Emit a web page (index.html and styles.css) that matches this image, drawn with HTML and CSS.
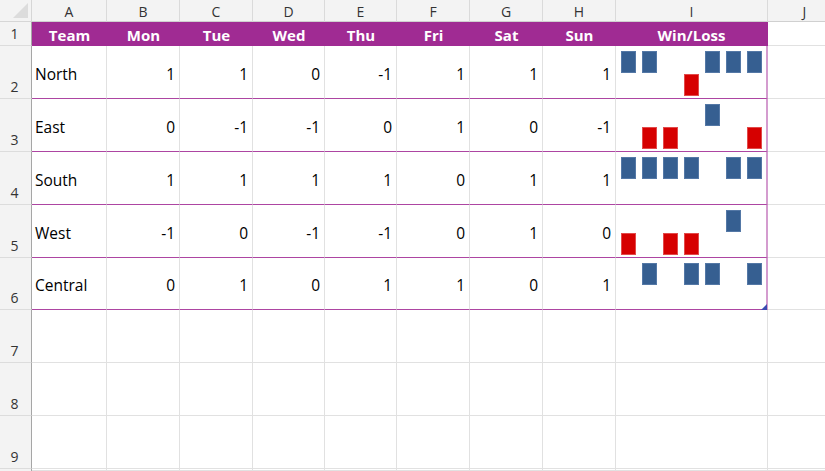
FILE: index.html
```html
<!DOCTYPE html>
<html>
<head>
<meta charset="utf-8">
<link rel="stylesheet" href="styles.css">
</head>
<body>
<div class="sheet">
  <!-- column headers -->
  <div class="corner"><div class="tri"></div></div>
  <div class="ch">A</div><div class="ch">B</div><div class="ch">C</div><div class="ch">D</div><div class="ch">E</div><div class="ch">F</div><div class="ch">G</div><div class="ch">H</div><div class="ch">I</div><div class="ch">J</div>

  <!-- row 1 -->
  <div class="rh rh1">1</div>
  <div class="th">Team</div><div class="th">Mon</div><div class="th">Tue</div><div class="th">Wed</div><div class="th">Thu</div><div class="th">Fri</div><div class="th">Sat</div><div class="th">Sun</div><div class="th th-last">Win/Loss</div>
  <div class="c"></div>

  <!-- row 2 -->
  <div class="rh">2</div>
  <div class="td txt">North</div><div class="td num">1</div><div class="td num">1</div><div class="td num">0</div><div class="td num">-1</div><div class="td num">1</div><div class="td num">1</div><div class="td num">1</div>
  <div class="td spark"><div class="slot p"><i></i></div><div class="slot p"><i></i></div><div class="slot z"><i></i></div><div class="slot n"><i></i></div><div class="slot p"><i></i></div><div class="slot p"><i></i></div><div class="slot p"><i></i></div></div>
  <div class="c"></div>

  <!-- row 3 -->
  <div class="rh">3</div>
  <div class="td txt">East</div><div class="td num">0</div><div class="td num">-1</div><div class="td num">-1</div><div class="td num">0</div><div class="td num">1</div><div class="td num">0</div><div class="td num">-1</div>
  <div class="td spark"><div class="slot z"><i></i></div><div class="slot n"><i></i></div><div class="slot n"><i></i></div><div class="slot z"><i></i></div><div class="slot p"><i></i></div><div class="slot z"><i></i></div><div class="slot n"><i></i></div></div>
  <div class="c"></div>

  <!-- row 4 -->
  <div class="rh">4</div>
  <div class="td txt">South</div><div class="td num">1</div><div class="td num">1</div><div class="td num">1</div><div class="td num">1</div><div class="td num">0</div><div class="td num">1</div><div class="td num">1</div>
  <div class="td spark"><div class="slot p"><i></i></div><div class="slot p"><i></i></div><div class="slot p"><i></i></div><div class="slot p"><i></i></div><div class="slot z"><i></i></div><div class="slot p"><i></i></div><div class="slot p"><i></i></div></div>
  <div class="c"></div>

  <!-- row 5 -->
  <div class="rh">5</div>
  <div class="td txt">West</div><div class="td num">-1</div><div class="td num">0</div><div class="td num">-1</div><div class="td num">-1</div><div class="td num">0</div><div class="td num">1</div><div class="td num">0</div>
  <div class="td spark"><div class="slot n"><i></i></div><div class="slot z"><i></i></div><div class="slot n"><i></i></div><div class="slot n"><i></i></div><div class="slot z"><i></i></div><div class="slot p"><i></i></div><div class="slot z"><i></i></div></div>
  <div class="c"></div>

  <!-- row 6 -->
  <div class="rh">6</div>
  <div class="td txt">Central</div><div class="td num">0</div><div class="td num">1</div><div class="td num">0</div><div class="td num">1</div><div class="td num">1</div><div class="td num">0</div><div class="td num">1</div>
  <div class="td spark handle"><div class="slot z"><i></i></div><div class="slot p"><i></i></div><div class="slot z"><i></i></div><div class="slot p"><i></i></div><div class="slot p"><i></i></div><div class="slot z"><i></i></div><div class="slot p"><i></i></div></div>
  <div class="c"></div>

  <!-- row 7 -->
  <div class="rh">7</div>
  <div class="c"></div><div class="c"></div><div class="c"></div><div class="c"></div><div class="c"></div><div class="c"></div><div class="c"></div><div class="c"></div><div class="c"></div><div class="c"></div>

  <!-- row 8 -->
  <div class="rh">8</div>
  <div class="c"></div><div class="c"></div><div class="c"></div><div class="c"></div><div class="c"></div><div class="c"></div><div class="c"></div><div class="c"></div><div class="c"></div><div class="c"></div>

  <!-- row 9 -->
  <div class="rh">9</div>
  <div class="c"></div><div class="c"></div><div class="c"></div><div class="c"></div><div class="c"></div><div class="c"></div><div class="c"></div><div class="c"></div><div class="c"></div><div class="c"></div>

  <!-- row 10 (partial) -->
  <div class="rh rh-edge"></div>
  <div class="c"></div><div class="c"></div><div class="c"></div><div class="c"></div><div class="c"></div><div class="c"></div><div class="c"></div><div class="c"></div><div class="c"></div><div class="c"></div>
</div>
</body>
</html>
```

FILE: styles.css
```css
* { box-sizing: border-box; }
html, body {
  margin: 0;
  padding: 0;
  background: #ffffff;
  overflow: hidden;
}
body {
  width: 825px;
  height: 471px;
  font-family: "Open Sans", "Noto Sans", sans-serif;
}
.sheet {
  display: grid;
  grid-template-columns: 32px 75px 73px 73px 72px 72px 73px 73px 73px 152px 74px;
  grid-template-rows: 22px 24px 53px 53px 53px 53px 52px 53px 53px 53px 2px;
  width: 825px;
  height: 471px;
  overflow: hidden;
}
.corner {
  background: #f3f3f3;
  border-right: 1px solid #d6d6d6;
  border-bottom: 1px solid #d6d6d6;
  position: relative;
}
.tri {
  position: absolute;
  right: 3px;
  bottom: 3px;
  width: 15px;
  height: 15px;
  background: #dcdcdc;
  clip-path: polygon(100% 0, 100% 100%, 0 100%);
}
.ch {
  background: #f3f3f3;
  border-right: 1px solid #dadada;
  border-bottom: 1px solid #d0d0d0;
  color: #333333;
  font-size: 14px;
  display: flex;
  align-items: center;
  justify-content: center;
  padding-top: 1px;
}
.rh {
  background: #f3f3f3;
  border-right: 1px solid #a6a6a6;
  border-bottom: 1px solid #dcdcdc;
  color: #333333;
  font-size: 14px;
  display: flex;
  align-items: flex-end;
  justify-content: center;
  padding-bottom: 2px;
  padding-right: 2px;
}
.rh1 {
  align-items: center;
  padding-bottom: 0;
}
.rh-edge {
  border-bottom: none;
}
.c {
  border-right: 1px solid #e1e1e1;
  border-bottom: 1px solid #e1e1e1;
}
.th {
  background: #a02b93;
  color: #ffffff;
  font-weight: 700;
  font-size: 15px;
  display: flex;
  align-items: center;
  justify-content: center;
  padding-top: 1px;
}
.th-last {
  border-right: 1px solid #a02b93;
}
.td {
  border-right: 1px solid #e1e1e1;
  border-bottom: 1px solid #ad45a2;
  color: #000000;
  font-size: 15.5px;
  display: flex;
  align-items: center;
  padding-top: 3px;
}
.txt {
  padding-left: 3px;
}
.num {
  justify-content: flex-end;
  padding-right: 4px;
}
.spark {
  align-items: flex-start;
  gap: 6px;
  padding: 5px 0 0 5px;
  border-right: 2px solid #d49ccf;
  position: relative;
}
.slot {
  width: 15px;
  display: flex;
  flex-direction: column;
}
.slot i {
  display: block;
  width: 15px;
  height: 22px;
}
.slot.p i {
  background: #365f91;
  border: 1px solid #5478a6;
}
.slot.n i {
  margin-top: 23px;
  background: #d60000;
  border: 1px solid #e24a4a;
}
.slot.z i {
  visibility: hidden;
}
.handle::after {
  content: "";
  position: absolute;
  right: -1px;
  bottom: -1px;
  width: 6px;
  height: 6px;
  background: #3b4bb0;
  clip-path: polygon(100% 0, 100% 100%, 0 100%);
}
```
